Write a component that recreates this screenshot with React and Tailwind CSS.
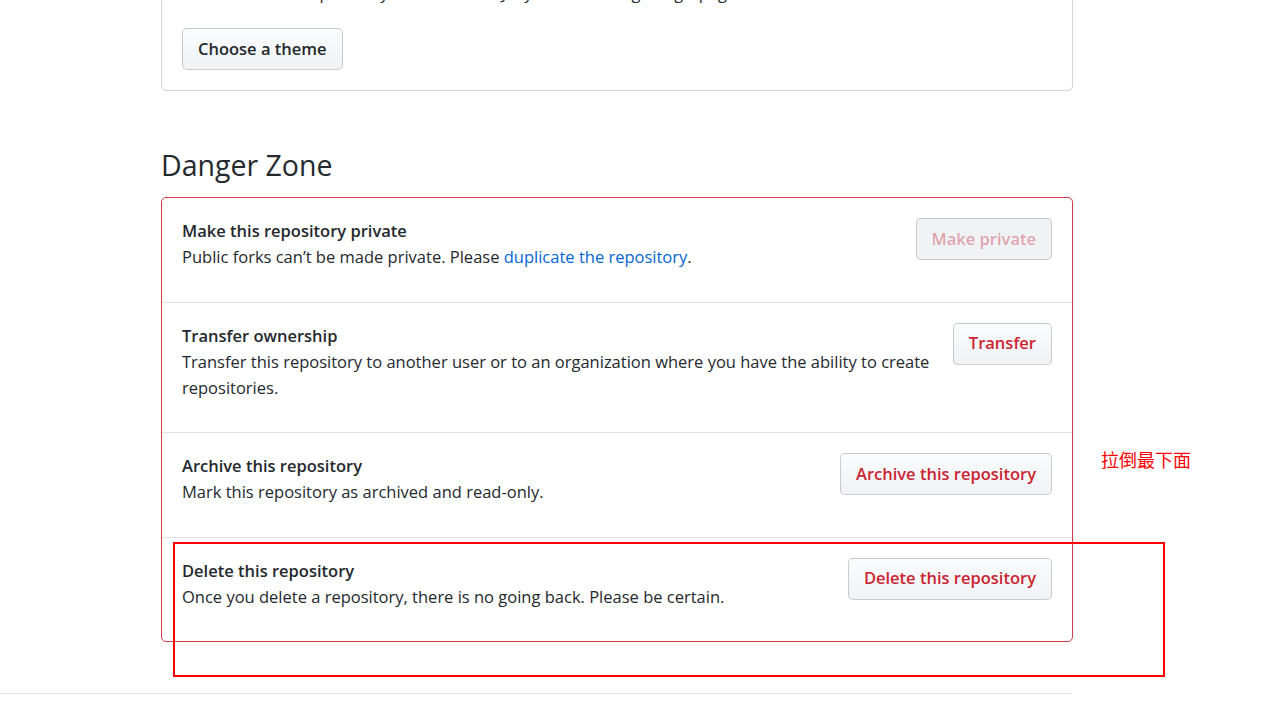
const FONT = { fontFamily: '"Open Sans", "Noto Sans", sans-serif' }

const rows = [
  {
    title: 'Make this repository private',
    desc: (
      <>
        Public forks can’t be made private. Please{' '}
        <a href="#" className="text-[#0366d6]">duplicate the repository</a>.
      </>
    ),
    action: 'Make private',
    disabled: true,
  },
  {
    title: 'Transfer ownership',
    desc: 'Transfer this repository to another user or to an organization where you have the ability to create repositories.',
    action: 'Transfer',
  },
  {
    title: 'Archive this repository',
    desc: 'Mark this repository as archived and read-only.',
    action: 'Archive this repository',
  },
  {
    title: 'Delete this repository',
    desc: 'Once you delete a repository, there is no going back. Please be certain.',
    action: 'Delete this repository',
  },
]

function Btn({ children, danger, disabled }) {
  const color = disabled
    ? 'text-[rgba(203,36,49,0.4)] bg-[#eff3f6]'
    : danger
      ? 'text-[#cb2431] bg-gradient-to-b from-[#fafbfc] to-[#eff3f6]'
      : 'text-[#24292e] bg-gradient-to-b from-[#fafbfc] to-[#eff3f6]'
  return (
    <button
      type="button"
      disabled={disabled}
      className={`h-[42px] px-[15px] rounded-[5px] border border-[rgba(27,31,35,0.2)] text-[16.5px] font-semibold whitespace-nowrap shrink-0 ${color}`}
    >
      {children}
    </button>
  )
}

export default function App() {
  return (
    <div className="relative w-[1265px] h-[722px] overflow-hidden bg-white text-[#24292e]" style={FONT}>
      <main className="ml-[161px] w-[912px] -mt-[41px]">
        <div className="border border-[#d1d5da] rounded-[5px] px-5 pt-5 pb-5">
          <p className="text-[16.5px] leading-[26px] mb-[22px] whitespace-nowrap">
            Select a theme to publish your site with a Jekyll theme using the gh-pages branch.
          </p>
          <Btn>Choose a theme</Btn>
        </div>

        <h2 className="mt-[56px] text-[28.5px] leading-[36px] font-normal">Danger Zone</h2>

        <div className="mt-[14px] border border-[#d73a49] rounded-[5px]">
          {rows.map((r, i) => (
            <div
              key={r.title}
              className={`flex items-start gap-4 px-5 pt-5 pb-[10.6px] ${i > 0 ? 'border-t border-[#e1e4e8]' : ''}`}
            >
              <div className="flex-1 min-w-0 text-[16.5px] leading-[26px]">
                <strong className="block font-semibold">{r.title}</strong>
                <p className="mb-[21px]">{r.desc}</p>
              </div>
              <Btn danger disabled={r.disabled}>{r.action}</Btn>
            </div>
          ))}
        </div>
      </main>

      <div className="mt-[51px] w-[1072px] border-t border-[#e1e4e8]" />

      <div className="absolute left-[173px] top-[542px] w-[992px] h-[135px] border-2 border-[#ff0000]" />
      <span
        className="absolute left-[1101px] top-[447px] text-[18px] leading-[24px] text-[#ff0000]"
        style={{ fontFamily: '"Noto Sans CJK SC", sans-serif' }}
      >
        拉倒最下面
      </span>
    </div>
  )
}
